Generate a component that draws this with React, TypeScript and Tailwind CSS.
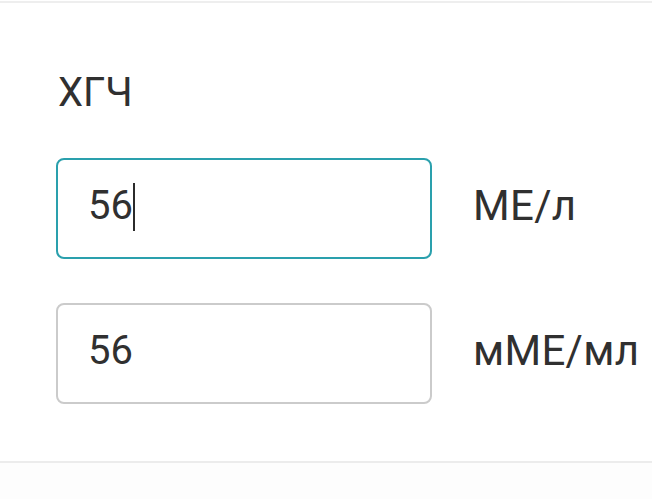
import React from 'react';

interface Field {
  value: string;
  unit: string;
  focused?: boolean;
}

const fields: Field[] = [
  { value: '56', unit: 'МЕ/л', focused: true },
  { value: '56', unit: 'мМЕ/мл' },
];

export default function App() {
  return (
    <div
      className="w-[652px] h-[499px] bg-white flex flex-col text-[#303030]"
      style={{ fontFamily: 'Roboto, "Noto Sans", sans-serif' }}
    >
      <div className="h-px" />
      <div className="h-[2px] bg-[#eeeeee]" />

      {/* Form */}
      <div className="pl-[56px] pt-[66px]">
        <div className="text-[40px] leading-[47px] pl-[2px]">ХГЧ</div>

        <div className="flex flex-col gap-[44px] mt-[42px]">
          {fields.map((field) => (
            <div key={field.unit} className="flex items-start gap-[41px]">
              <div
                className={
                  field.focused
                    ? 'w-[376px] h-[101px] rounded-[8px] border-2 border-[#2aa0ad] pl-[30px] pt-[22px] flex items-start'
                    : 'w-[376px] h-[101px] rounded-[8px] border-2 border-[#cbcbcb] pl-[30px] pt-[22px] flex items-start'
                }
              >
                <span className="text-[40px] leading-[47px]">{field.value}</span>
                {field.focused && (
                  <span className="w-[2px] h-[48px] bg-[#2b2b2b] mt-px" />
                )}
              </div>
              <div className="text-[42px] leading-[47px] mt-[24px] tracking-[0.3px]">{field.unit}</div>
            </div>
          ))}
        </div>
      </div>

      <div className="mt-[57px] h-[2px] bg-[#ececec]" />
      <div className="flex-1 bg-[#fdfdfd]" />
    </div>
  );
}
